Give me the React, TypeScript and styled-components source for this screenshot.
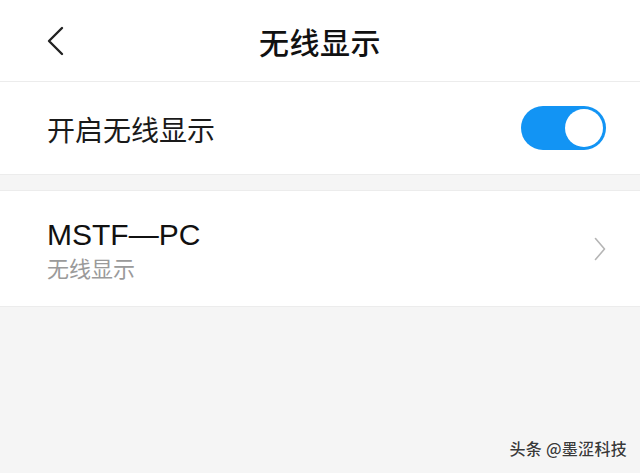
import React from 'react';
import styled, { createGlobalStyle } from 'styled-components';

const Global = createGlobalStyle`
  html, body {
    margin: 0;
    padding: 0;
    background: #f5f5f5;
  }
  body {
    font-family: "Noto Sans CJK SC", "Noto Sans", sans-serif;
    color: #111;
  }
`;

const Page = styled.div`
  position: relative;
  width: 640px;
  height: 473px;
  background: #f5f5f5;
  overflow: hidden;
`;

const Header = styled.header`
  height: 81px;
  background: #fff;
  border-bottom: 1px solid #ececec;
  display: grid;
  grid-template-columns: 1fr auto 1fr;
  align-items: center;
`;

const BackButton = styled.button`
  justify-self: start;
  margin-left: 40px;
  padding: 4px 6px;
  border: 0;
  background: none;
  display: flex;
  align-items: center;
`;

const Title = styled.h1`
  margin: 0;
  font-size: 30px;
  line-height: 1.2;
  font-weight: 500;
  color: #111;
  letter-spacing: 0.5px;
`;

const Group = styled.section`
  background: #fff;
  border-bottom: 1px solid #ececec;
`;

const Spacer = styled.div`
  height: 15px;
  background: #f5f5f5;
  border-bottom: 1px solid #ececec;
`;

const Row = styled.div<{ $height: number }>`
  height: ${p => p.$height}px;
  box-sizing: border-box;
  display: flex;
  align-items: center;
  justify-content: space-between;
  padding: 0 34px 0 47px;
`;

const Label = styled.span`
  font-size: 28px;
  line-height: 1.2;
  color: #1a1a1a;
  padding-top: 4px;
`;

const TextBlock = styled.div`
  display: flex;
  flex-direction: column;
`;

const ItemTitle = styled.span`
  font-family: "Liberation Sans", Arial, "Noto Sans CJK SC", sans-serif;
  font-size: 30px;
  font-weight: 400;
  line-height: 36px;
  color: #111;
`;

const ItemSub = styled.span`
  font-size: 22px;
  line-height: 28px;
  color: #9a9a9a;
`;

const Switch = styled.div<{ $on: boolean }>`
  width: 85px;
  height: 44px;
  border-radius: 22px;
  background: ${p => (p.$on ? '#1294f4' : '#ddd')};
  display: flex;
  align-items: center;
  justify-content: ${p => (p.$on ? 'flex-end' : 'flex-start')};
  padding: 0 3px;
  box-sizing: border-box;
`;

const Knob = styled.span`
  width: 38px;
  height: 38px;
  border-radius: 50%;
  background: #fff;
`;

const Watermark = styled.div`
  position: absolute;
  right: 13px;
  bottom: 13px;
  font-size: 16px;
  font-weight: 500;
  color: #3a3a3a;
  text-shadow: 0 0 2px #fff, 0 0 2px #fff;
  letter-spacing: 0.3px;
`;

function ChevronLeft() {
  return (
    <svg width="18" height="30" viewBox="0 0 18 30">
      <path d="M16 2 L3 15 L16 28" fill="none" stroke="#222" strokeWidth="2.4" strokeLinecap="round" strokeLinejoin="round" />
    </svg>
  );
}

function ChevronRight() {
  return (
    <svg width="12" height="24" viewBox="0 0 12 24">
      <path d="M1.5 1.5 L10.5 12 L1.5 22.5" fill="none" stroke="#b5b5b5" strokeWidth="1.6" strokeLinecap="round" strokeLinejoin="round" />
    </svg>
  );
}

export default function App() {
  return (
    <Page>
      <Global />
      <Header>
        <BackButton aria-label="返回">
          <ChevronLeft />
        </BackButton>
        <Title>无线显示</Title>
        <span />
      </Header>

      <Group>
        <Row $height={92}>
          <Label>开启无线显示</Label>
          <Switch $on>
            <Knob />
          </Switch>
        </Row>
      </Group>

      <Spacer />

      <Group>
        <Row $height={115}>
          <TextBlock>
            <ItemTitle>MSTF—PC</ItemTitle>
            <ItemSub>无线显示</ItemSub>
          </TextBlock>
          <ChevronRight />
        </Row>
      </Group>

      <Watermark>头条 @墨涩科技</Watermark>
    </Page>
  );
}
